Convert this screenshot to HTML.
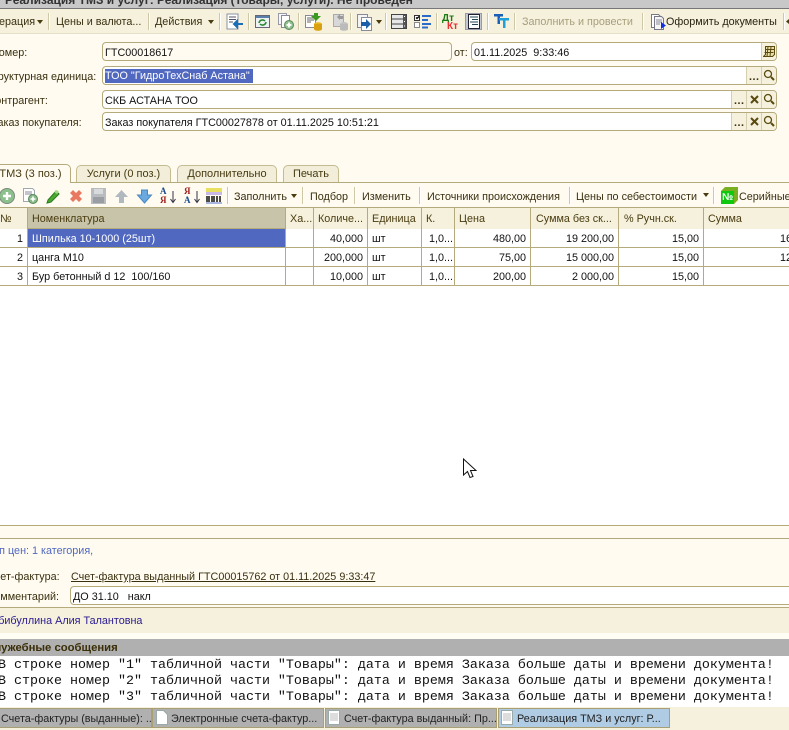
<!DOCTYPE html>
<html><head><meta charset="utf-8"><style>
html,body{margin:0;padding:0;width:789px;height:730px;overflow:hidden;background:#fffbf0}
#r{position:relative;width:789px;height:730px;overflow:hidden;font-family:"Liberation Sans",sans-serif;font-size:10.8px;color:#3a3010}
.a,.t,.b,svg{position:absolute}
.t{white-space:pre;line-height:14px;height:14px}
.sep{position:absolute;width:1px;background:#cfc8a6;border-right:1px solid #fff}
.f{position:absolute;background:#fff;border:1px solid #b5aa7c;border-radius:4px;box-sizing:border-box}
.btn{position:absolute;background:#f5f1dd;border-left:1px solid #d5cfb0;box-sizing:border-box;color:#5b4a10}
.tab{position:absolute;background:#f2eed9;border:1px solid #c4bb91;border-bottom:none;border-radius:5px 5px 0 0;box-sizing:border-box;text-align:center;line-height:19px;color:#463a10;font-size:11px}
.h{position:absolute;top:208px;height:21px;background:#f5f1dd;border-right:1px solid #b5aa7c;box-sizing:border-box;line-height:22px;padding-left:4px;overflow:hidden;white-space:pre;color:#4a3c10}
.c{position:absolute;height:19px;background:#fff;border-right:1px solid #b5aa7c;border-bottom:1px solid #b5aa7c;box-sizing:border-box;line-height:20px;padding:0 4px;overflow:hidden;white-space:pre;color:#111}
.n{text-align:right}
.m{position:absolute;left:-2px;font-family:"Liberation Mono",monospace;font-size:13.33px;line-height:16px;white-space:pre;color:#111}
.tb{position:absolute;top:708px;height:20px;background:#b0b0b0;border:1px solid #a89f75;box-sizing:border-box;line-height:20px;white-space:pre;overflow:hidden;color:#222}
.dn{position:absolute;width:0;height:0;border-left:3.5px solid transparent;border-right:3.5px solid transparent;border-top:4px solid #4a3c10}
</style></head><body><div id="r">

<div class="a" style="left:0;top:0;width:789px;height:8px;background:#c8c8c8;overflow:hidden"><div class="t" style="left:5px;top:-7px;font-weight:bold;font-size:12px;color:#333">Реализация ТМЗ и услуг: Реализация (Товары, услуги). Не проведен</div></div>
<div class="a" style="left:0;top:8px;width:789px;height:1px;background:#777"></div>
<div class="a" style="left:0;top:9px;width:789px;height:25px;background:#f5f1dd"></div>
<div class="a" style="left:0;top:33px;width:789px;height:1px;background:#e5e0c8"></div>

<div class="t" style="left:-1px;top:15px">ерация</div><div class="dn" style="left:37px;top:20px"></div>
<div class="sep" style="left:48px;top:13px;height:17px"></div>
<div class="t" style="left:56px;top:15px">Цены и валюта...</div>
<div class="sep" style="left:148px;top:13px;height:17px"></div>
<div class="t" style="left:155px;top:15px">Действия</div><div class="dn" style="left:208px;top:20px"></div>
<div class="sep" style="left:219px;top:13px;height:17px"></div>

<svg style="left:226px;top:13px" width="18" height="18" viewBox="0 0 18 18"><path d="M1 1h11v15H1z" fill="#fff" stroke="#8a94a8"/><path d="M3 4h7M3 6.500h7M3 9h4" stroke="#556"/><path d="M17 11H8M8 11l3-3v6z" stroke="#1a6fb8" stroke-width="2" fill="#1a6fb8"/></svg>
<div class="sep" style="left:248px;top:13px;height:17px"></div>
<svg style="left:255px;top:14px" width="15" height="15" viewBox="0 0 15 15"><path d="M.5 1.500h14v12H.5z" fill="#eef2f5" stroke="#667"/><path d="M1 2h13v2H1z" fill="#5a7fa8"/><path d="M4 9a3.500 3.500 0 0 1 6-2M11 8a3.500 3.500 0 0 1-6 2" fill="none" stroke="#2a8a30" stroke-width="1.600"/></svg>
<svg style="left:278px;top:13px" width="16" height="17" viewBox="0 0 16 17"><path d="M.5.500h8v11h-8z" fill="#f4f6f8" stroke="#99a"/><path d="M3.500 2.500h8v12h-8z" fill="#fff" stroke="#889"/><circle cx="11" cy="12" r="4.500" fill="#8fc08f" stroke="#5a8a5a"/><path d="M8.500 12h5M11 9.500v5" stroke="#fff" stroke-width="1.800"/></svg>
<div class="sep" style="left:298px;top:13px;height:17px"></div>
<svg style="left:305px;top:13px" width="18" height="18" viewBox="0 0 18 18"><path d="M.5 2.500h10v12H.5z" fill="#fff" stroke="#889"/><path d="M2 5h7M2 7h7M2 9h4" stroke="#666"/><path d="M9 0h4v3h3l-5 5-5-5h3z" fill="#3a9a20"/><ellipse cx="13" cy="11" rx="4" ry="1.800" fill="#e8b820"/><path d="M9 11v5c0 2.400 8 2.400 8 0v-5" fill="#d9a010"/></svg>
<svg style="left:333px;top:13px" width="16" height="18" viewBox="0 0 16 18"><path d="M.5 1.500h10v12H.5z" fill="#d8d8d8" stroke="#aaa"/><path d="M4 4l3-3v2h3v3H7v1z" fill="#999"/><ellipse cx="11" cy="11" rx="4" ry="2" fill="#c4c4c4"/><path d="M7 11v5c0 2.400 8 2.400 8 0v-5" fill="#bbb"/></svg>
<div class="sep" style="left:350px;top:13px;height:17px"></div>
<svg style="left:357px;top:14px" width="18" height="17" viewBox="0 0 18 17"><path d="M.5.500h10v13H.5z" fill="#f4f4f4" stroke="#889"/><path d="M4.500 3.500h10v13h-10z" fill="#fff" stroke="#889"/><path d="M4 8h5V5l5 5-5 5v-3H4z" fill="#1a5fa8"/></svg>
<div class="dn" style="left:376px;top:20px"></div>
<div class="sep" style="left:385px;top:13px;height:17px"></div>
<svg style="left:391px;top:14px" width="16" height="15" viewBox="0 0 16 15"><path d="M.5.500h15v14H.5z" fill="#e8e8e8" stroke="#444"/><path d="M1 5h14M1 10h14" stroke="#444"/><path d="M12 1h3v13h-3z" fill="#555"/><path d="M13 2.500h1M13 7.500h1M13 12h1" stroke="#fff"/></svg>
<svg style="left:414px;top:14px" width="18" height="15" viewBox="0 0 18 15"><path d="M.5 1.500h5v5h-5z" fill="#fff" stroke="#333"/><path d="M2 3.500l1 1 2-2" stroke="#000" stroke-width="1.300" fill="none"/><path d="M.5 8.500h5v5h-5z" fill="#fff" stroke="#888"/><path d="M8 1h9v2H8zM8 5h6v2H8zM8 9h9v2H8zM8 12.500h6v2H8z" fill="#2a6ac8"/></svg>
<div class="sep" style="left:436px;top:13px;height:17px"></div>
<div class="t" style="left:442px;top:12px;font-weight:bold;font-size:10px;color:#1a7a10">Дт</div>
<div class="t" style="left:447px;top:20px;font-weight:bold;font-size:10px;color:#e83030">Кт</div>
<svg style="left:465px;top:13px" width="18" height="17" viewBox="0 0 18 17"><path d="M.5.500h16v16H.5z" fill="#c4c8d0" stroke="#99a"/><path d="M3.500 1.500h11v14h-11z" fill="#fff" stroke="#223"/><path d="M5 4h8M7 6.500h6M5 9h8M7 11.500h6" stroke="#245"/></svg>
<div class="sep" style="left:487px;top:13px;height:17px"></div>
<svg style="left:494px;top:13px" width="15" height="16" viewBox="0 0 15 16"><path d="M0 1h9v2.500H6V11H3.500V3.500H0z" fill="#1a5fb8"/><path d="M5 5h10v2.500h-3.500V15H9V7.500H5z" fill="#20a0d8"/></svg>
<div class="sep" style="left:514px;top:13px;height:17px"></div>
<div class="t" style="left:522px;top:15px;color:#a89e7c">Заполнить и провести</div>
<div class="sep" style="left:642px;top:13px;height:17px"></div>
<svg style="left:651px;top:14px" width="15" height="16" viewBox="0 0 15 16"><path d="M.5.500h7l2 2v11h-9z" fill="#fff" stroke="#778"/><path d="M3.500 2.500h7l2 2v11h-9z" fill="#f6f6f6" stroke="#778"/><path d="M5 6h6M5 8h6M5 10h4" stroke="#889"/><path d="M10 8l5 3.500-5 3.500z" fill="#1030e0"/></svg>
<div class="t" style="left:666px;top:15px;color:#2a2410">Оформить документы</div>
<div class="sep" style="left:783px;top:13px;height:17px"></div>
<svg style="left:786px;top:19px" width="3" height="5"><path d="M0 2.500L3 0v5z" fill="#4a3c10"/></svg>

<div class="t" style="left:-9px;top:46px">Номер:</div>
<div class="f" style="left:102px;top:42px;width:350px;height:19px;background:#fffbf0"></div>
<div class="t" style="left:105px;top:46px;color:#111">ГТС00018617</div>
<div class="t" style="left:454px;top:46px">от:</div>
<div class="f" style="left:471px;top:42px;width:306px;height:19px"></div>
<div class="t" style="left:474px;top:46px;color:#111">01.11.2025  9:33:46</div>
<div class="btn" style="left:761px;top:43px;width:15px;height:17px;border-radius:0 3px 3px 0"></div>
<svg style="left:763px;top:45px" width="12" height="13" viewBox="0 0 12 13"><path d="M2.500 1.500h9v8l-2 2h-9l2-2z" fill="#e8dfa8" stroke="#5a4a10"/><path d="M2 4.500h9M1.500 7.500h9M5 1.500l-1 10M8 1.500l-1 10" stroke="#5a4a10"/></svg>

<div class="t" style="left:-15px;top:70px">Структурная единица:</div>
<div class="f" style="left:102px;top:66px;width:675px;height:19px"></div>
<div class="a" style="left:105px;top:69px;width:148px;height:14px;background:#5068c0"></div>
<div class="t" style="left:105px;top:69px;color:#fff">ТОО "ГидроТехСнаб Астана"</div>
<div class="btn" style="left:746px;top:67px;width:15px;height:17px"></div><div class="btn" style="left:761px;top:67px;width:15px;height:17px;border-radius:0 3px 3px 0"></div>
<div class="t" style="left:749px;top:70px;font-weight:bold;letter-spacing:.5px">...</div>

<div class="t" style="left:-11px;top:94px">Контрагент:</div>
<div class="f" style="left:102px;top:90px;width:675px;height:19px"></div>
<div class="t" style="left:105px;top:94px;color:#111">СКБ АСТАНА ТОО</div>
<div class="btn" style="left:731px;top:91px;width:15px;height:17px"></div><div class="btn" style="left:746px;top:91px;width:15px;height:17px"></div><div class="btn" style="left:761px;top:91px;width:15px;height:17px;border-radius:0 3px 3px 0"></div>
<div class="t" style="left:734px;top:94px;font-weight:bold;letter-spacing:.5px">...</div>

<div class="t" style="left:-9px;top:116px">Заказ покупателя:</div>
<div class="f" style="left:102px;top:112px;width:675px;height:19px"></div>
<div class="t" style="left:105px;top:116px;color:#111">Заказ покупателя ГТС00027878 от 01.11.2025 10:51:21</div>
<div class="btn" style="left:731px;top:113px;width:15px;height:17px"></div><div class="btn" style="left:746px;top:113px;width:15px;height:17px"></div><div class="btn" style="left:761px;top:113px;width:15px;height:17px;border-radius:0 3px 3px 0"></div>
<div class="t" style="left:734px;top:116px;font-weight:bold;letter-spacing:.5px">...</div>

<svg style="left:0;top:0" width="789" height="140"><g fill="none" stroke="#5a4a10">
<g stroke-width="1.300"><circle cx="768" cy="74" r="3.500"/><path d="M771 77l3 3" stroke-width="2"/><circle cx="768" cy="98" r="3.500"/><path d="M771 101l3 3" stroke-width="2"/><circle cx="768" cy="120" r="3.500"/><path d="M771 123l3 3" stroke-width="2"/></g>
<g stroke-width="2"><path d="M751 96l7 7M758 96l-7 7M751 118l7 7M758 118l-7 7"/></g></g></svg>

<div class="a" style="left:0;top:182px;width:789px;height:1px;background:#b5aa7c"></div>
<div class="tab" style="left:-10px;top:164px;width:81px;height:19px;background:#fffbf0;border-color:#b5aa7c;z-index:2">  ТМЗ (3 поз.)</div>
<div class="tab" style="left:76px;top:165px;width:95px;height:17px;line-height:17px">Услуги (0 поз.)</div>
<div class="tab" style="left:177px;top:165px;width:100px;height:17px;line-height:17px">Дополнительно</div>
<div class="tab" style="left:283px;top:165px;width:56px;height:17px;line-height:17px">Печать</div>

<svg style="left:0;top:187px" width="230" height="18" viewBox="0 0 230 18">
<circle cx="7" cy="9" r="7.500" fill="#8cc08c" stroke="#7a8a7a"/><path d="M3 9h8M7 5v8" stroke="#fff" stroke-width="2.400"/>
<path d="M23.500 1.500h9l2 2v11h-11z" fill="#fff" stroke="#a0a8b0"/><path d="M25 5h7M25 7h7" stroke="#889"/><circle cx="33" cy="12" r="4.500" fill="#88bb88" stroke="#5a8a5a"/><path d="M30.500 12h5M33 9.500v5" stroke="#fff" stroke-width="1.600"/>
<path d="M48 13l8-9 3 3-8 8-4 1z" fill="#4aaa30" stroke="#2a7a20"/><path d="M54 5l3-2 2 2-2 2z" fill="#a0d880"/>
<path d="M70 6l3-3 3 3 3-3 3 3-3 3 3 3-3 3-3-3-3 3-3-3 3-3z" fill="#e87860"/>
<path d="M91 1h15v16H91z" fill="#b8bcc0"/><path d="M94 2h9v5h-9z" fill="#d8dadc"/><path d="M93 10h11v6H93z" fill="#9a9ea2"/>
<path d="M121.500 3l6.500 7h-4v6h-5v-6h-4z" fill="#b0b8c0"/>
<path d="M144.500 16l7-8h-4V3h-6v5h-4z" fill="#6aa8e0" stroke="#4a88c0"/>
<path d="M173 4v11M170.500 12l2.500 3.500 2.500-3.500M197 4v11M194.500 12l2.500 3.500 2.500-3.500" stroke="#334" fill="none"/>
<path d="M206 1h16v4h-16z" fill="#e8e060"/><path d="M206 5h16v3h-16z" fill="#c8b8e8"/><path d="M206 15h16v2h-16z" fill="#a8b8e0"/>
<path d="M207 9v6M209 9v6M212 9v6M214 9v6M217 9v6M220 9v6" stroke="#111" stroke-width="1.500"/>
</svg>
<div class="t" style="left:160px;top:186px;font:bold 9px 'Liberation Serif',serif;color:#1a4a90">А</div>
<div class="t" style="left:160px;top:195px;font:bold 9px 'Liberation Serif',serif;color:#a02020">Я</div>
<div class="t" style="left:184px;top:186px;font:bold 9px 'Liberation Serif',serif;color:#a02020">Я</div>
<div class="t" style="left:184px;top:195px;font:bold 9px 'Liberation Serif',serif;color:#1a4a90">А</div>

<div class="sep" style="left:227px;top:187px;height:17px"></div>
<div class="t" style="left:234px;top:190px">Заполнить</div><div class="dn" style="left:291px;top:194px"></div>
<div class="sep" style="left:302px;top:187px;height:17px"></div>
<div class="t" style="left:310px;top:190px">Подбор</div>
<div class="sep" style="left:354px;top:187px;height:17px"></div>
<div class="t" style="left:362px;top:190px">Изменить</div>
<div class="sep" style="left:419px;top:187px;height:17px"></div>
<div class="t" style="left:427px;top:190px">Источники происхождения</div>
<div class="sep" style="left:569px;top:187px;height:17px"></div>
<div class="t" style="left:576px;top:190px">Цены по себестоимости</div><div class="dn" style="left:703px;top:193px"></div>
<div class="sep" style="left:713px;top:187px;height:17px"></div>
<svg style="left:721px;top:187px" width="17" height="17" viewBox="0 0 17 17"><path d="M0 4l4-4h13v13l-4 4H0z" fill="#7ab020"/><path d="M0 4h13v13H0z" fill="#10c810"/></svg>
<div class="t" style="left:722px;top:191px;font-size:10px;font-weight:bold;color:#fff">№</div>
<div class="t" style="left:739px;top:190px">Серийные</div>

<div class="a" style="left:0;top:207px;width:789px;height:1px;background:#b5aa7c"></div>
<div class="a" style="left:0;top:229px;width:789px;height:296px;background:#fff"></div>
<div class="a" style="left:0;top:228px;width:789px;height:1px;background:#b5aa7c"></div>

<div class="h" style="left:0;width:28px;padding-left:0;border-right:1px solid #b5aa7c">№</div>
<div class="h" style="left:28px;width:258px;background:#c8c4aa;height:20px">Номенклатура</div>
<div class="h" style="left:286px;width:28px">Ха...</div>
<div class="h" style="left:314px;width:54px">Количе...</div>
<div class="h" style="left:368px;width:54px">Единица</div>
<div class="h" style="left:422px;width:33px">К.</div>
<div class="h" style="left:455px;width:76px">Цена</div>
<div class="h" style="left:531px;width:88px;padding-left:5px">Сумма без ск...</div>
<div class="h" style="left:619px;width:85px;padding-left:5px">% Ручн.ск.</div>
<div class="h" style="left:704px;width:85px;border-right:none">Сумма</div>

<div class="c n" style="left:0;top:229px;width:28px">1</div>
<div class="c" style="left:28px;top:229px;width:258px;background:#5068c0;color:#fff">Шпилька 10-1000 (25шт)</div>
<div class="c" style="left:286px;top:229px;width:28px"></div>
<div class="c n" style="left:314px;top:229px;width:54px">40,000</div>
<div class="c" style="left:368px;top:229px;width:54px">шт</div>
<div class="c" style="left:422px;top:229px;width:33px;padding-left:7px">1,0...</div>
<div class="c n" style="left:455px;top:229px;width:76px">480,00</div>
<div class="c n" style="left:531px;top:229px;width:88px">19 200,00</div>
<div class="c n" style="left:619px;top:229px;width:85px">15,00</div>
<div class="c" style="left:704px;top:229px;width:85px;border-right:none;padding-left:76px">16 320,00</div>

<div class="c n" style="left:0;top:248px;width:28px">2</div>
<div class="c" style="left:28px;top:248px;width:258px">цанга М10</div>
<div class="c" style="left:286px;top:248px;width:28px"></div>
<div class="c n" style="left:314px;top:248px;width:54px">200,000</div>
<div class="c" style="left:368px;top:248px;width:54px">шт</div>
<div class="c" style="left:422px;top:248px;width:33px;padding-left:7px">1,0...</div>
<div class="c n" style="left:455px;top:248px;width:76px">75,00</div>
<div class="c n" style="left:531px;top:248px;width:88px">15 000,00</div>
<div class="c n" style="left:619px;top:248px;width:85px">15,00</div>
<div class="c" style="left:704px;top:248px;width:85px;border-right:none;padding-left:76px">12 750,00</div>

<div class="c n" style="left:0;top:267px;width:28px">3</div>
<div class="c" style="left:28px;top:267px;width:258px">Бур бетонный d 12  100/160</div>
<div class="c" style="left:286px;top:267px;width:28px"></div>
<div class="c n" style="left:314px;top:267px;width:54px">10,000</div>
<div class="c" style="left:368px;top:267px;width:54px">шт</div>
<div class="c" style="left:422px;top:267px;width:33px;padding-left:7px">1,0...</div>
<div class="c n" style="left:455px;top:267px;width:76px">200,00</div>
<div class="c n" style="left:531px;top:267px;width:88px">2 000,00</div>
<div class="c n" style="left:619px;top:267px;width:85px">15,00</div>
<div class="c" style="left:704px;top:267px;width:85px;border-right:none"></div>

<svg style="left:462px;top:458px" width="16" height="22" viewBox="0 0 16 22"><path d="M1.500 1v16l4-3.500 2.500 6 3-1-2.500-6h5.500z" fill="#fff" stroke="#111"/></svg>

<div class="a" style="left:0;top:525px;width:789px;height:1px;background:#b5aa7c"></div>
<div class="a" style="left:0;top:538px;width:789px;height:1px;background:#b5aa7c"></div>
<div class="t" style="left:-13px;top:544px;color:#5068c0">Тип цен: 1 категория,</div>
<div class="t" style="left:-13px;top:570px">Счет-фактура:</div>
<div class="t" style="left:71px;top:570px;color:#3a3010;text-decoration:underline">Счет-фактура выданный ГТС00015762 от 01.11.2025 9:33:47</div>
<div class="t" style="left:-12px;top:590px">Комментарий:</div>
<div class="f" style="left:70px;top:586px;width:730px;height:19px"></div>
<div class="t" style="left:73px;top:590px;color:#111">ДО 31.10   накл</div>
<div class="a" style="left:0;top:607px;width:789px;height:26px;background:#f5f1dd"></div>
<div class="a" style="left:0;top:607px;width:789px;height:1px;background:#b5aa7c"></div>
<div class="t" style="left:-15px;top:614px;color:#2a1a90">Хабибуллина Алия Талантовна</div>
<div class="a" style="left:0;top:633px;width:789px;height:6px;background:#fffdf4"></div>
<div class="a" style="left:0;top:639px;width:789px;height:17px;background:#b0b0b0"></div>
<div class="t" style="left:-14px;top:641px;font-weight:bold;font-size:11.3px;color:#3a2e08">Служебные сообщения</div>
<div class="a" style="left:0;top:656px;width:789px;height:51px;background:#fff"></div>
<div class="m" style="top:658px">В строке номер "1" табличной части "Товары": дата и время Заказа больше даты и времени документа!</div>
<div class="m" style="top:674px">В строке номер "2" табличной части "Товары": дата и время Заказа больше даты и времени документа!</div>
<div class="m" style="top:690px">В строке номер "3" табличной части "Товары": дата и время Заказа больше даты и времени документа!</div>

<div class="a" style="left:0;top:707px;width:789px;height:23px;background:#f5f1dd"></div>
<div class="tb" style="left:-1px;width:153px;padding-left:1px">Счета-фактуры (выданные): ...</div>
<div class="tb" style="left:152px;width:172px;padding-left:18px">Электронные счета-фактур...</div>
<div class="tb" style="left:325px;width:172px;padding-left:18px">Счет-фактура выданный: Пр...</div>
<div class="tb" style="left:498px;width:172px;padding-left:18px;background:#b0cce4">Реализация ТМЗ и услуг: Р...</div>
<svg style="left:156px;top:710px" width="12" height="15" viewBox="0 0 12 15"><path d="M.5.500h7l4 4v10H.5z" fill="#fff" stroke="#9aa"/></svg>
<svg style="left:328px;top:710px" width="12" height="15" viewBox="0 0 12 15"><path d="M.5.500h11v14H.5z" fill="#fff" stroke="#9aa"/><path d="M2 4h8M2 6h8M2 8h8M2 10h8" stroke="#bbb"/></svg>
<svg style="left:501px;top:710px" width="12" height="15" viewBox="0 0 12 15"><path d="M.5.500h11v14H.5z" fill="#fff" stroke="#9aa"/><path d="M2 4h8M2 6h8M2 8h8M2 10h8" stroke="#bbb"/></svg>

</div></body></html>
